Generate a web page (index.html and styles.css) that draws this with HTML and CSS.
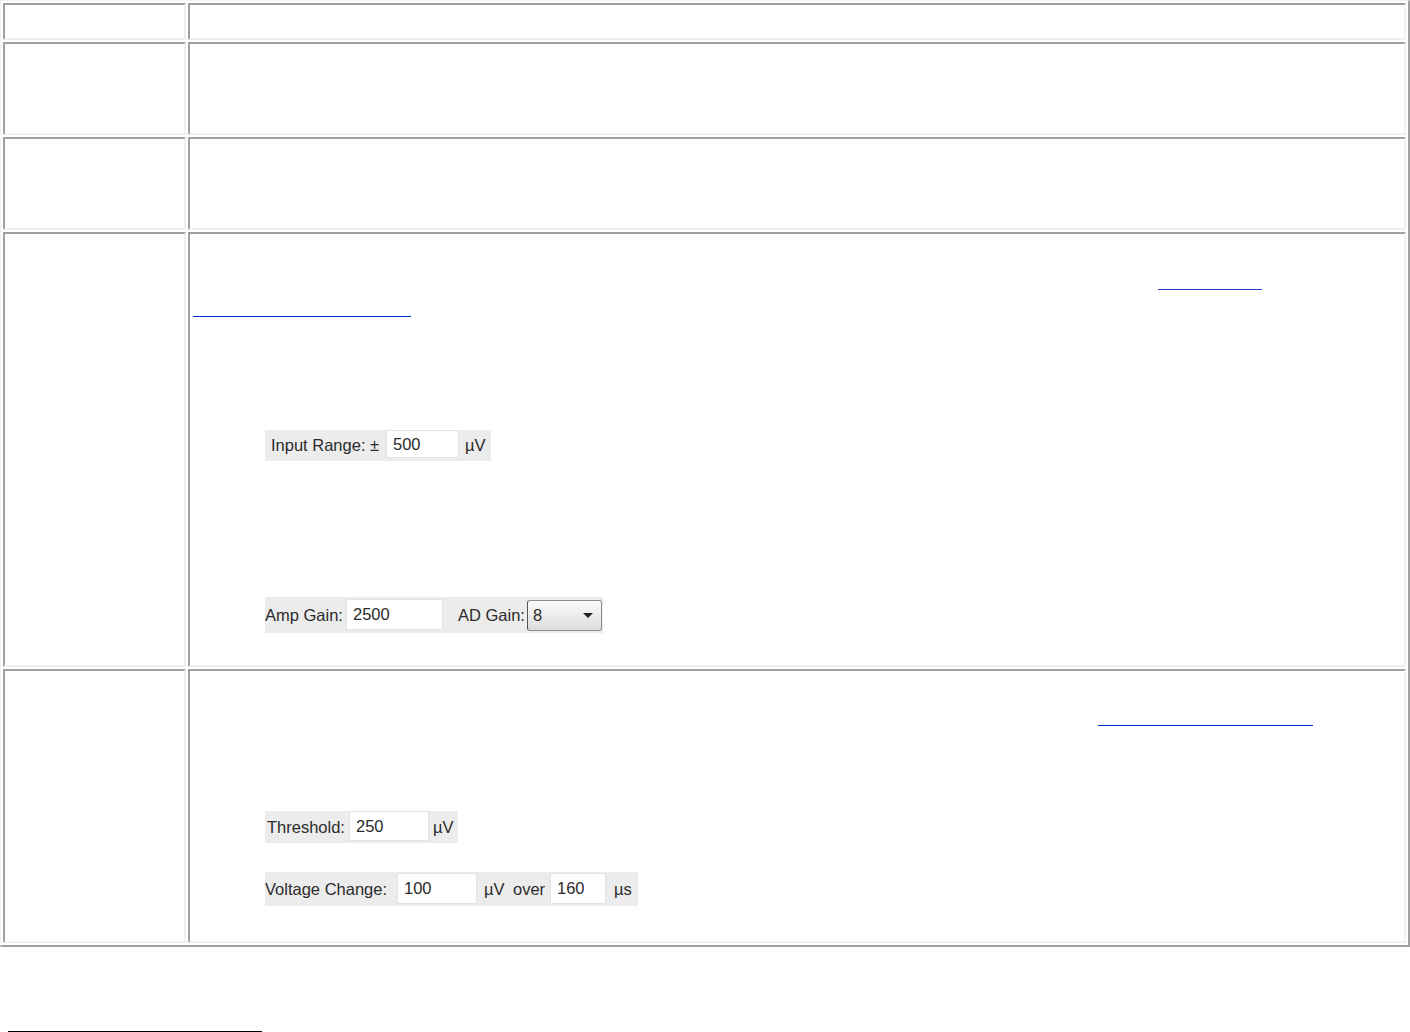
FILE: index.html
```html
<!DOCTYPE html>
<html lang="en">
  <head>
    <meta charset="UTF-8" />
    <meta name="viewport" content="width=device-width, initial-scale=1.0" />
    <title>Channel Settings</title>
    <link rel="stylesheet" href="styles.css">
  </head>
  <body>
    <table class="info">
      <tr class="row-head">
        <td class="name"></td>
        <td class="desc"></td>
      </tr>
      <tr class="row-short">
        <td class="name"></td>
        <td class="desc"></td>
      </tr>
      <tr class="row-short">
        <td class="name"></td>
        <td class="desc"></td>
      </tr>
      <tr class="row-range">
        <td class="name"></td>
        <td class="desc">
          <a class="ref ref-range-a" href="#"></a>
          <a class="ref ref-range-b" href="#"></a>

          <div class="panel panel-input">
            <span class="lbl lbl-input">Input Range: &plusmn;</span>
            <span class="field field-input">500</span>
            <span class="unit unit-input">&micro;V</span>
          </div>

          <div class="panel panel-gain">
            <span class="lbl lbl-amp">Amp Gain:</span>
            <span class="field field-amp">2500</span>
            <span class="lbl lbl-ad">AD Gain:</span>
            <span class="select">8<span class="arrow"></span></span>
          </div>
        </td>
      </tr>
      <tr class="row-detect">
        <td class="name"></td>
        <td class="desc">
          <a class="ref ref-detect" href="#"></a>

          <div class="panel panel-threshold">
            <span class="lbl lbl-threshold">Threshold:</span>
            <span class="field field-threshold">250</span>
            <span class="unit unit-threshold">&micro;V</span>
          </div>

          <div class="panel panel-voltage">
            <span class="lbl lbl-voltage">Voltage Change:</span>
            <span class="field field-voltage">100</span>
            <span class="unit unit-uv">&micro;V</span>
            <span class="unit unit-over">over</span>
            <span class="field field-time">160</span>
            <span class="unit unit-us">&micro;s</span>
          </div>
        </td>
      </tr>
    </table>

    <div class="footnote-rule"></div>
  </body>
</html>
```

FILE: styles.css
```css
/* styles.css */
body {
  margin: 0;
  background-color: #fff;
  font-family: "Liberation Sans", Arial, sans-serif;
  color: #2b2b2b;
}

/* old-style border="1" table */
.info {
  width: 1410px;
  table-layout: fixed;
  border-collapse: separate;
  border-spacing: 2px;
  border-style: solid;
  border-width: 1px 2px 2px 1px;
  border-color: #f0f0f0 #a0a0a0 #a0a0a0 #f0f0f0;
}

.info td {
  box-sizing: border-box;
  padding: 0;
  vertical-align: top;
  border: 2px solid;
  border-color: #a0a0a0 #f0f0f0 #f0f0f0 #a0a0a0;
}

.name {
  width: 183px;
}

.row-head td {
  height: 37px;
}

.row-short td {
  height: 93px;
}

.row-range td {
  height: 435px;
}

.row-detect td {
  height: 274px;
}

/* link underlines */
.ref {
  display: block;
  height: 0;
  border-bottom: 1px solid #0033cc;
}

.ref-range-a {
  width: 104px;
  margin: 55px 0 0 968px;
  border-bottom-color: #1f43c4;
}

.ref-range-b {
  width: 218px;
  margin: 26px 0 0 3px;
}

.ref-detect {
  width: 215px;
  margin: 54px 0 0 908px;
}

/* dialog snippets */
.panel {
  display: flex;
  align-items: center;
  margin-left: 75px;
  background-color: #ececec;
  font-size: 16.5px;
  white-space: nowrap;
  overflow: hidden;
}

.lbl,
.unit,
.field,
.select {
  flex: none;
}

.field {
  box-sizing: border-box;
  align-self: flex-start;
  background-color: #fff;
  border: 1px solid #e2e2e2;
  padding-left: 6px;
  display: flex;
  align-items: center;
}

.panel-input {
  width: 226px;
  height: 31px;
  margin-top: 113px;
}

.lbl-input {
  margin-left: 6px;
  width: 115px;
}

.field-input {
  width: 73px;
  height: 28px;
}

.unit-input {
  margin-left: 6px;
}

.panel-gain {
  width: 338px;
  height: 36px;
  margin-top: 136px;
}

.lbl-amp {
  width: 81px;
}

.field-amp {
  width: 97px;
  height: 31px;
  margin-top: 2px;
}

.lbl-ad {
  margin-left: 15px;
  width: 69px;
}

.select {
  box-sizing: border-box;
  position: relative;
  width: 75px;
  height: 31px;
  padding-left: 5px;
  display: flex;
  align-items: center;
  border: 1px solid #8c8c8c;
  border-left-color: #555;
  border-radius: 3px;
  background: linear-gradient(#fbfbfb, #dcdcdc);
}

.arrow {
  position: absolute;
  right: 8px;
  top: 12px;
  border-left: 5px solid transparent;
  border-right: 5px solid transparent;
  border-top: 5px solid #222;
}

.panel-threshold {
  width: 193px;
  height: 32px;
  margin-top: 85px;
}

.lbl-threshold {
  margin-left: 2px;
  width: 82px;
}

.field-threshold {
  width: 80px;
  height: 30px;
}

.unit-threshold {
  margin-left: 4px;
}

.panel-voltage {
  width: 373px;
  height: 34px;
  margin-top: 29px;
}

.lbl-voltage {
  width: 132px;
}

.field-voltage {
  width: 80px;
  height: 31px;
  margin-top: 1px;
}

.unit-uv {
  margin-left: 7px;
  width: 29px;
}

.unit-over {
  width: 37px;
}

.field-time {
  width: 56px;
  height: 31px;
  margin-top: 1px;
}

.unit-us {
  margin-left: 8px;
}

.footnote-rule {
  width: 254px;
  height: 2px;
  margin: 84px 0 0 8px;
  background-color: #000;
}
```
